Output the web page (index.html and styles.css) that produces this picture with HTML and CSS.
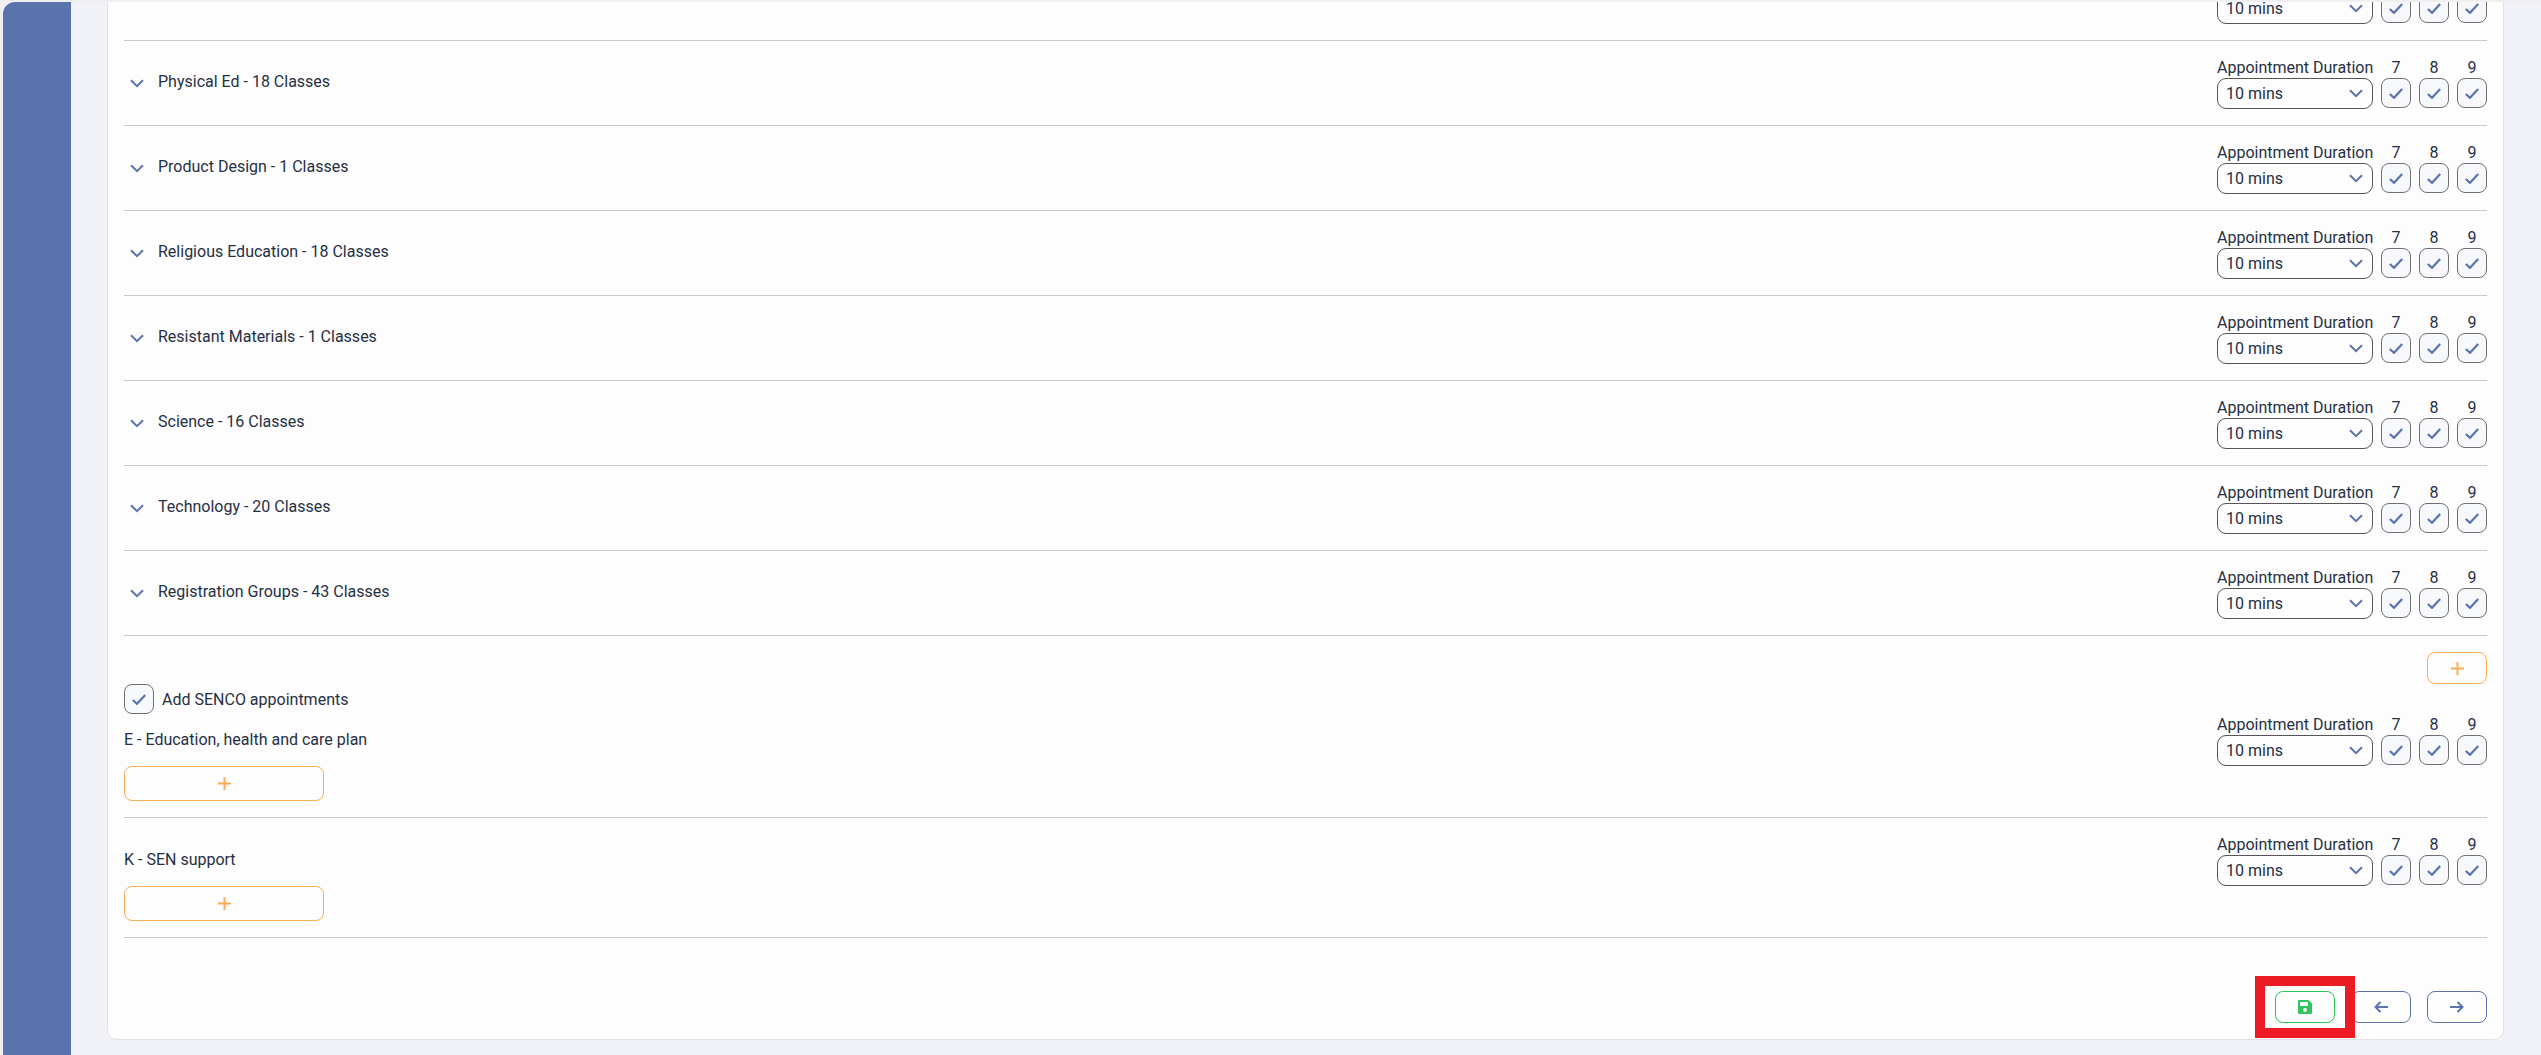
FILE: index.html
```html
<!DOCTYPE html>
<html lang="en">
<head>
  <meta charset="UTF-8" />
  <title>Appointment settings</title>
  <link rel="stylesheet" href="styles.css">
</head>
<body>
  <svg class="icon-defs" aria-hidden="true">
    <symbol id="i-chev" viewBox="0 0 14 9"><path d="M1 1.2l6 6 6-6" fill="none" stroke="currentColor" stroke-width="2"/></symbol>
    <symbol id="i-check" viewBox="0 0 14 11"><path d="M.8 6l4.2 3.8L13.2 1" fill="none" stroke="currentColor" stroke-width="2.2"/></symbol>
    <symbol id="i-plus" viewBox="0 0 13 13"><path d="M6.5 0v13M0 6.5h13" fill="none" stroke="currentColor" stroke-width="2"/></symbol>
    <symbol id="i-save" viewBox="0 0 448 512"><path fill="currentColor" d="M433.941 129.941l-83.882-83.882A48 48 0 0 0 316.118 32H48C21.49 32 0 53.49 0 80v352c0 26.51 21.49 48 48 48h352c26.51 0 48-21.49 48-48V163.882a48 48 0 0 0-14.059-33.941zM224 416c-35.346 0-64-28.654-64-64 0-35.346 28.654-64 64-64s64 28.654 64 64c0 35.346-28.654 64-64 64zm96-304.52V212c0 6.627-5.373 12-12 12H76c-6.627 0-12-5.373-12-12V108c0-6.627 5.373-12 12-12h228.52c3.183 0 6.235 1.264 8.485 3.515l3.48 3.48A11.996 11.996 0 0 1 320 111.48z"/></symbol>
    <symbol id="i-left" viewBox="0 0 14 12"><path d="M14 6H1.5M6.5 1L1.5 6l5 5" fill="none" stroke="currentColor" stroke-width="2"/></symbol>
    <symbol id="i-right" viewBox="0 0 14 12"><path d="M0 6h12.5M7.5 1l5 5-5 5" fill="none" stroke="currentColor" stroke-width="2"/></symbol>
  </svg>

  <div class="app">
    <aside class="sidebar"></aside>

    <main class="main">
      <div class="card">
        <!-- subject rows -->
        <div class="row">
          <div class="row-title"></div>
          <div class="controls">
            <div class="controls-head"></div>
            <div class="controls-body"><select class="dur-select"><option>10 mins</option></select><span class="check"><svg><use href="#i-check"/></svg></span><span class="check"><svg><use href="#i-check"/></svg></span><span class="check"><svg><use href="#i-check"/></svg></span></div>
          </div>
        </div>

        <div class="row">
          <div class="row-title"><svg class="chev"><use href="#i-chev"/></svg>Physical Ed - 18 Classes</div>
          <div class="controls">
            <div class="controls-head"><span class="dur-label">Appointment Duration</span><span class="yr">7</span><span class="yr">8</span><span class="yr">9</span></div>
            <div class="controls-body"><select class="dur-select"><option>10 mins</option></select><span class="check"><svg><use href="#i-check"/></svg></span><span class="check"><svg><use href="#i-check"/></svg></span><span class="check"><svg><use href="#i-check"/></svg></span></div>
          </div>
        </div>

        <div class="row">
          <div class="row-title"><svg class="chev"><use href="#i-chev"/></svg>Product Design - 1 Classes</div>
          <div class="controls">
            <div class="controls-head"><span class="dur-label">Appointment Duration</span><span class="yr">7</span><span class="yr">8</span><span class="yr">9</span></div>
            <div class="controls-body"><select class="dur-select"><option>10 mins</option></select><span class="check"><svg><use href="#i-check"/></svg></span><span class="check"><svg><use href="#i-check"/></svg></span><span class="check"><svg><use href="#i-check"/></svg></span></div>
          </div>
        </div>

        <div class="row">
          <div class="row-title"><svg class="chev"><use href="#i-chev"/></svg>Religious Education - 18 Classes</div>
          <div class="controls">
            <div class="controls-head"><span class="dur-label">Appointment Duration</span><span class="yr">7</span><span class="yr">8</span><span class="yr">9</span></div>
            <div class="controls-body"><select class="dur-select"><option>10 mins</option></select><span class="check"><svg><use href="#i-check"/></svg></span><span class="check"><svg><use href="#i-check"/></svg></span><span class="check"><svg><use href="#i-check"/></svg></span></div>
          </div>
        </div>

        <div class="row">
          <div class="row-title"><svg class="chev"><use href="#i-chev"/></svg>Resistant Materials - 1 Classes</div>
          <div class="controls">
            <div class="controls-head"><span class="dur-label">Appointment Duration</span><span class="yr">7</span><span class="yr">8</span><span class="yr">9</span></div>
            <div class="controls-body"><select class="dur-select"><option>10 mins</option></select><span class="check"><svg><use href="#i-check"/></svg></span><span class="check"><svg><use href="#i-check"/></svg></span><span class="check"><svg><use href="#i-check"/></svg></span></div>
          </div>
        </div>

        <div class="row">
          <div class="row-title"><svg class="chev"><use href="#i-chev"/></svg>Science - 16 Classes</div>
          <div class="controls">
            <div class="controls-head"><span class="dur-label">Appointment Duration</span><span class="yr">7</span><span class="yr">8</span><span class="yr">9</span></div>
            <div class="controls-body"><select class="dur-select"><option>10 mins</option></select><span class="check"><svg><use href="#i-check"/></svg></span><span class="check"><svg><use href="#i-check"/></svg></span><span class="check"><svg><use href="#i-check"/></svg></span></div>
          </div>
        </div>

        <div class="row">
          <div class="row-title"><svg class="chev"><use href="#i-chev"/></svg>Technology - 20 Classes</div>
          <div class="controls">
            <div class="controls-head"><span class="dur-label">Appointment Duration</span><span class="yr">7</span><span class="yr">8</span><span class="yr">9</span></div>
            <div class="controls-body"><select class="dur-select"><option>10 mins</option></select><span class="check"><svg><use href="#i-check"/></svg></span><span class="check"><svg><use href="#i-check"/></svg></span><span class="check"><svg><use href="#i-check"/></svg></span></div>
          </div>
        </div>

        <div class="row">
          <div class="row-title"><svg class="chev"><use href="#i-chev"/></svg>Registration Groups - 43 Classes</div>
          <div class="controls">
            <div class="controls-head"><span class="dur-label">Appointment Duration</span><span class="yr">7</span><span class="yr">8</span><span class="yr">9</span></div>
            <div class="controls-body"><select class="dur-select"><option>10 mins</option></select><span class="check"><svg><use href="#i-check"/></svg></span><span class="check"><svg><use href="#i-check"/></svg></span><span class="check"><svg><use href="#i-check"/></svg></span></div>
          </div>
        </div>

        <!-- SENCO -->
        <div class="senco-row">
          <div class="senco-left">
            <label class="senco-toggle"><span class="check check-dark"><svg><use href="#i-check"/></svg></span>Add SENCO appointments</label>
            <div class="senco-name">E - Education, health and care plan</div>
            <button class="btn-add btn-wide"><svg><use href="#i-plus"/></svg></button>
          </div>
          <div class="senco-right">
            <button class="btn-add btn-small"><svg><use href="#i-plus"/></svg></button>
            <div class="controls">
              <div class="controls-head"><span class="dur-label">Appointment Duration</span><span class="yr">7</span><span class="yr">8</span><span class="yr">9</span></div>
              <div class="controls-body"><select class="dur-select"><option>10 mins</option></select><span class="check"><svg><use href="#i-check"/></svg></span><span class="check"><svg><use href="#i-check"/></svg></span><span class="check"><svg><use href="#i-check"/></svg></span></div>
            </div>
          </div>
        </div>

        <div class="senco-row senco-row-k">
          <div class="senco-left">
            <div class="senco-name">K - SEN support</div>
            <button class="btn-add btn-wide"><svg><use href="#i-plus"/></svg></button>
          </div>
          <div class="senco-right">
            <div class="controls">
              <div class="controls-head"><span class="dur-label">Appointment Duration</span><span class="yr">7</span><span class="yr">8</span><span class="yr">9</span></div>
              <div class="controls-body"><select class="dur-select"><option>10 mins</option></select><span class="check"><svg><use href="#i-check"/></svg></span><span class="check"><svg><use href="#i-check"/></svg></span><span class="check"><svg><use href="#i-check"/></svg></span></div>
            </div>
          </div>
        </div>

        <div class="card-footer">
          <div class="save-wrap">
            <button class="btn-nav btn-save"><svg class="save-icon"><use href="#i-save"/></svg></button>
            <div class="highlight"></div>
          </div>
          <button class="btn-nav"><svg class="arrow"><use href="#i-left"/></svg></button>
          <button class="btn-nav"><svg class="arrow"><use href="#i-right"/></svg></button>
        </div>
      </div>
    </main>
  </div>
</body>
</html>
```

FILE: styles.css
```css
* {
  box-sizing: border-box;
}
html, body {
  margin: 0;
  height: 100%;
  overflow: hidden;
}
body {
  font-family: Roboto, sans-serif;
  font-size: 16px;
  color: #263044;
  background-color: #f0f2f7;
}
.icon-defs {
  display: none;
}
.app {
  display: flex;
  height: 1055px;
  border-top: 2px solid #efefef;
  border-left: 3px solid #efefef;
}
.sidebar {
  flex: 0 0 68px;
  background-color: #5b73ad;
  border-top-left-radius: 12px;
}
.main {
  flex: 1;
  padding-left: 36px;
  overflow: hidden;
}
.card {
  width: 2397px;
  margin-top: -47px;
  padding: 0 16px 16px;
  background-color: #fdfdfd;
  border: 1px solid #e2e3e6;
  border-radius: 10px;
}
.row {
  display: flex;
  justify-content: space-between;
  align-items: center;
  height: 85px;
  border-bottom: 1px solid #c9cacc;
}
.row-title {
  display: flex;
  align-items: center;
  margin-top: -3px;
}
.chev {
  width: 14px;
  height: 9px;
  margin: 4px 14px 0 6px;
  color: #5b73ad;
}
.controls {
  width: 270px;
  margin-top: 1px;
}
.controls-head,
.controls-body {
  display: flex;
  justify-content: space-between;
}
.controls-head {
  height: 20px;
  line-height: 19px;
}
.dur-label {
  width: 156px;
  white-space: nowrap;
}
.yr {
  width: 30px;
  text-align: center;
}
.dur-select {
  width: 156px;
  height: 31px;
  padding: 0 0 0 8px;
  font-family: Roboto, sans-serif;
  font-size: 16px;
  color: #263044;
  appearance: none;
  background: #fdfdfd url("data:image/svg+xml,%3Csvg xmlns='http://www.w3.org/2000/svg' width='14' height='9'%3E%3Cpath d='M1 1.2l6 6 6-6' fill='none' stroke='%235b73ad' stroke-width='2'/%3E%3C/svg%3E") no-repeat right 9px center;
  border: 1px solid #555;
  border-radius: 9px;
}
.check {
  display: flex;
  align-items: center;
  justify-content: center;
  flex: 0 0 30px;
  width: 30px;
  height: 30px;
  color: #5b73ad;
  background-color: #f6f8fc;
  border: 1px solid #707070;
  border-radius: 8px;
}
.check svg {
  width: 14px;
  height: 11px;
}
.senco-row {
  display: flex;
  justify-content: space-between;
  height: 182px;
  border-bottom: 1px solid #c9cacc;
}
.senco-row-k {
  height: 120px;
}
.senco-left {
  padding-top: 48px;
}
.senco-row-k .senco-left {
  padding-top: 32px;
}
.senco-toggle {
  display: flex;
  align-items: center;
  gap: 8px;
  height: 30px;
}
.senco-name {
  height: 20px;
  margin-top: 16px;
  line-height: 20px;
}
.senco-row-k .senco-name {
  margin-top: 0;
}
.senco-right {
  display: flex;
  flex-direction: column;
  align-items: flex-end;
  padding-top: 16px;
}
.senco-right .controls {
  margin-top: 31px;
}
.senco-row-k .senco-right {
  padding-top: 17px;
}
.senco-row-k .senco-right .controls {
  margin-top: 0;
}
.btn-add {
  display: flex;
  align-items: center;
  justify-content: center;
  padding: 0;
  color: #f9ae55;
  background-color: #fdfdfd;
  border: 1px solid #f9ae55;
  border-radius: 8px;
}
.btn-add svg {
  width: 13px;
  height: 13px;
}
.btn-wide {
  width: 200px;
  height: 35px;
  margin-top: 16px;
}
.btn-small {
  width: 60px;
  height: 32px;
}
.card-footer {
  display: flex;
  justify-content: flex-end;
  gap: 16px;
  padding-top: 53px;
}
.save-wrap {
  position: relative;
}
.btn-nav {
  display: flex;
  align-items: center;
  justify-content: center;
  width: 60px;
  height: 32px;
  padding: 0;
  color: #5b73ad;
  background-color: #fdfdfd;
  border: 1px solid #5b73ad;
  border-radius: 8px;
}
.btn-save {
  color: #2cc45c;
  border-color: #2cc45c;
}
.save-icon {
  width: 14px;
  height: 16px;
  margin-top: -1px;
}
.arrow {
  width: 14px;
  height: 12px;
}
.highlight {
  position: absolute;
  top: -15px;
  left: -20px;
  width: 100px;
  height: 62px;
  border: 10px solid #ed1c24;
}
```
